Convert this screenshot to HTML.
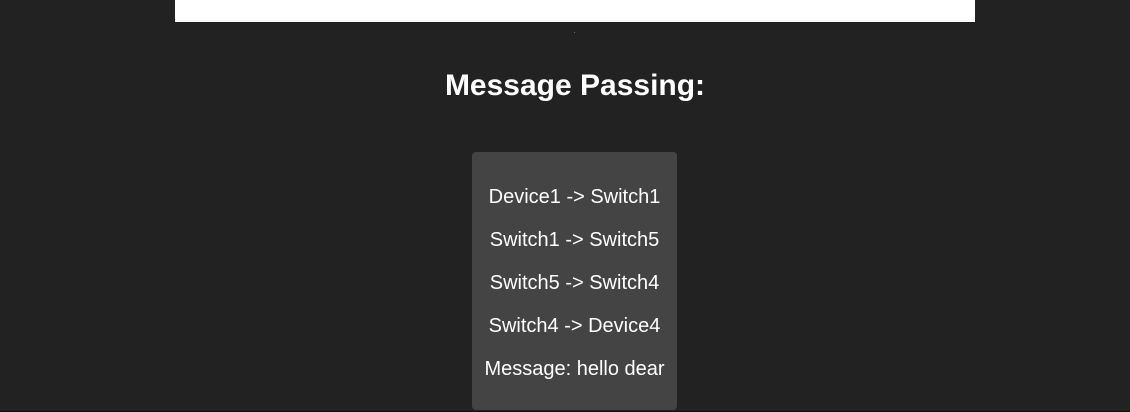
<!DOCTYPE html>
<html><head><style>
html,body{margin:0;padding:0;background:#222;width:1130px;height:412px;overflow:hidden;font-family:"Liberation Sans",Arial,sans-serif;color:#fff}
.bar{position:absolute;left:175px;top:0;width:800px;height:22px;background:#fff}
.dot{position:absolute;left:574px;top:32px;width:1px;height:1px;background:#666}
h1{position:absolute;left:10px;width:1130px;top:68px;margin:0;text-align:center;font-size:30px;font-weight:bold;line-height:36px}
.box{position:absolute;left:472px;top:152px;width:205px;height:258px;background:#444;border-radius:4px}
.box div{position:absolute;left:0;width:205px;text-align:center;font-size:20px;line-height:22px}
.bl{position:absolute;left:0;top:411px;width:1130px;height:1px;background:#111}
</style></head><body>
<div class="bar"></div><div class="dot"></div>
<h1>Message Passing:</h1>
<div class="box">
<div style="top:34px">Device1 -&gt; Switch1</div>
<div style="top:77px">Switch1 -&gt; Switch5</div>
<div style="top:120px">Switch5 -&gt; Switch4</div>
<div style="top:163px">Switch4 -&gt; Device4</div>
<div style="top:206px">Message: hello dear</div>
</div>
<div class="bl"></div>
</body></html>
